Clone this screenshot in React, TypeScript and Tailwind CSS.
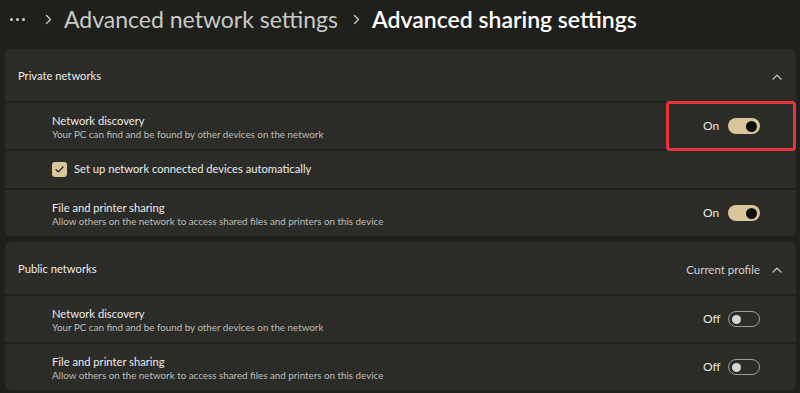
import React from 'react';

const font = { fontFamily: 'Lato, "Noto Sans", sans-serif' };

const ChevronUp: React.FC = () => (
  <svg width="10" height="6" viewBox="0 0 10 6" fill="none">
    <path d="M1 5.2 5 1.2 9 5.2" stroke="#d6d6d6" strokeWidth="1.2" strokeLinecap="round" strokeLinejoin="round" />
  </svg>
);

const Crumb: React.FC = () => (
  <svg width="7" height="11" viewBox="0 0 7 11" fill="none">
    <path d="M1.5 1.5 5.5 5.5 1.5 9.5" stroke="#c8c8c8" strokeWidth="1.4" strokeLinecap="round" strokeLinejoin="round" />
  </svg>
);

const Toggle: React.FC<{ on: boolean }> = ({ on }) => (
  <div className="flex items-center gap-[7px]">
    <span className="text-[12px] text-[#e6e6e6] w-[18px]">{on ? 'On' : 'Off'}</span>
    {on ? (
      <div className="w-[32px] h-[16px] rounded-full bg-[#d9c69b] flex items-center justify-end pr-[3px]">
        <div className="w-[11px] h-[11px] rounded-full bg-[#0d0d0b]" />
      </div>
    ) : (
      <div className="w-[32px] h-[16px] rounded-full border border-[#9c9c98] flex items-center pl-[3px]">
        <div className="w-[9px] h-[9px] rounded-full bg-[#d4d4d2]" />
      </div>
    )}
  </div>
);

const SettingRow: React.FC<{ title: string; desc: string; on: boolean }> = ({ title, desc, on }) => (
  <div className="h-[48px] border-t-2 border-[#20211d] flex items-center justify-between pl-[47px] pr-[36px]">
    <div className="flex flex-col pt-[1px]">
      <span className="text-[11.2px] leading-[15px] text-[#ececec]">{title}</span>
      <span className="text-[9.8px] leading-[13px] text-[#bdbdbb]">{desc}</span>
    </div>
    <Toggle on={on} />
  </div>
);

const PanelHeader: React.FC<{ title: string; extra?: string }> = ({ title, extra }) => (
  <div className="h-[52px] flex items-center justify-between pl-[13px] pr-[14px] pt-[3px]">
    <span className="text-[11.2px] text-[#ececec]">{title}</span>
    <div className="flex items-center gap-[12px]">
      {extra && <span className="text-[11.5px] text-[#d0d0ce]">{extra}</span>}
      <ChevronUp />
    </div>
  </div>
);

export default function App() {
  return (
    <div className="w-[800px] h-[393px] bg-[#1f201c] overflow-hidden relative" style={font}>
      {/* Breadcrumb */}
      <div className="h-[38px] flex items-center pl-[10px] pt-[1px]">
        <div className="flex gap-[3px]">
          <div className="w-[3px] h-[3px] rounded-full bg-[#d0d0d0]" />
          <div className="w-[3px] h-[3px] rounded-full bg-[#d0d0d0]" />
          <div className="w-[3px] h-[3px] rounded-full bg-[#d0d0d0]" />
        </div>
        <div className="ml-[20px] mr-[12px] flex"><Crumb /></div>
        <span className="text-[#c9c9c7] text-[23px]">Advanced network settings</span>
        <div className="ml-[15px] mr-[12px] flex"><Crumb /></div>
        <span className="text-white text-[23px] font-semibold">Advanced sharing settings</span>
      </div>

      <div className="mt-[11px] pl-[5px] pr-[4px] flex flex-col gap-[6px]">
        {/* Private networks */}
        <div className="rounded-[6px] bg-[#2b2b27] overflow-hidden">
          <PanelHeader title="Private networks" />
          <SettingRow title="Network discovery" desc="Your PC can find and be found by other devices on the network" on />
          <div className="h-[39px] border-t-2 border-[#20211d] flex items-center pl-[47px] gap-[7px]">
            <div className="w-[15px] h-[15px] rounded-[3px] bg-[#d9c69b] flex items-center justify-center">
              <svg width="9" height="7" viewBox="0 0 9 7" fill="none">
                <path d="M1 3.6 3.3 5.8 8 1" stroke="#1a1a17" strokeWidth="1.2" strokeLinecap="round" strokeLinejoin="round" />
              </svg>
            </div>
            <span className="text-[11.2px] text-[#ececec]">Set up network connected devices automatically</span>
          </div>
          <SettingRow title="File and printer sharing" desc="Allow others on the network to access shared files and printers on this device" on />
        </div>

        {/* Public networks */}
        <div className="rounded-[6px] bg-[#2b2b27] overflow-hidden">
          <PanelHeader title="Public networks" extra="Current profile" />
          <SettingRow title="Network discovery" desc="Your PC can find and be found by other devices on the network" on={false} />
          <SettingRow title="File and printer sharing" desc="Allow others on the network to access shared files and printers on this device" on={false} />
        </div>
      </div>

      {/* Highlight annotation */}
      <div className="absolute left-[666px] top-[101px] w-[130px] h-[50px] border-[3px] border-[#e8353b] rounded-[4px]" />
    </div>
  );
}
